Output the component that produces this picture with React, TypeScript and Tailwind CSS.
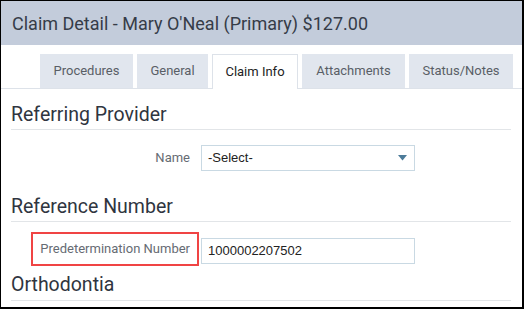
export default function App() {
  const tabs = [
    { label: "Procedures", w: "w-[93px]" },
    { label: "General", w: "w-[71px]" },
    { label: "Claim Info", w: "w-[86px]", active: true },
    { label: "Attachments", w: "w-[103px]" },
    { label: "Status/Notes", w: "w-[104px]" },
  ];

  return (
    <div className="w-[524px] h-[309px] overflow-hidden bg-white border-t border-l border-r-2 border-b-2 border-black font-['Roboto',sans-serif]">
      {/* header */}
      <div className="h-[44px] bg-[#c3ccdb] pl-[11px] flex items-center text-[18px] text-[#363c48]">
        Claim Detail - Mary O'Neal (Primary) $127.00
      </div>

      {/* tabs */}
      <div className="flex gap-[4px] pl-[39px] pt-[9px] border-b border-[#dde2e9]">
        {tabs.map((t) => (
          <div
            key={t.label}
            className={`${t.w} h-[34px] flex items-center justify-center text-[13px] ${
              t.active
                ? "bg-white border border-b-0 border-[#dde2e9] -mb-px h-[35px] text-[#222]"
                : "bg-[#e1e6ee] text-[#595e66]"
            }`}
          >
            {t.label}
          </div>
        ))}
      </div>

      {/* content */}
      <div className="pl-[10px] pr-[11px]">
        <div className="mt-[15px] pb-[3px] border-b border-[#e2e5e8] text-[19.5px] leading-[22px] text-[#2f3540]">
          Referring Provider
        </div>

        <div className="mt-[15px] ml-[20px] flex items-center">
          <div className="w-[168px] h-[26px] flex items-center justify-end pr-[9px] text-[13px] text-[#666b73]">
            Name
          </div>
          <div className="ml-[2px] w-[214px] h-[26px] border border-[#c9d9e3] flex items-center justify-between pl-[6px] pr-[7px] font-['Liberation_Sans',sans-serif] text-[13px] text-[#222]">
            <span>-Select-</span>
            <svg width="9" height="6" viewBox="0 0 9 6">
              <path d="M0 0H9L4.5 5.5Z" fill="#4c7b99" />
            </svg>
          </div>
        </div>

        <div className="mt-[25px] pb-[3px] border-b border-[#e2e5e8] text-[19.5px] leading-[22px] text-[#2f3540]">
          Reference Number
        </div>

        <div className="mt-[10px] ml-[20px] flex items-start">
          <div className="w-[168px] h-[34px] border-2 border-[#f04444] flex items-center justify-end pr-[7px] text-[13px] text-[#666b73]">
            Predetermination Number
          </div>
          <div className="ml-[2px] mt-[6px] w-[214px] h-[26px] border border-[#c9d9e3] flex items-center pl-[6px] font-['Liberation_Sans',sans-serif] text-[13px] text-[#222]">
            1000002207502
          </div>
        </div>

        <div className="mt-[8px] pb-[4px] border-b border-[#e2e5e8] text-[19.5px] leading-[22px] text-[#2f3540]">
          Orthodontia
        </div>
      </div>
    </div>
  );
}
